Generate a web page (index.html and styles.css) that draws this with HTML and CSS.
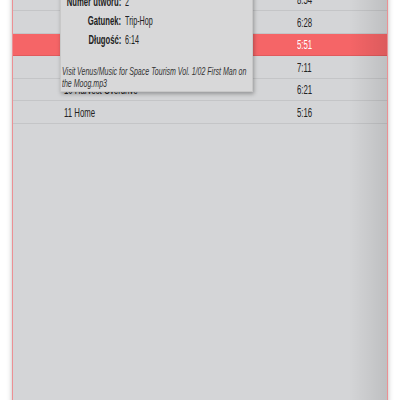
FILE: index.html
```html
<html>

<head>
    <meta charset="UTF-8" />
    <link rel="stylesheet" href="styles.css">
</head>

<body>
    <div id="app">
        <div id="lista">
            <div class="faixa"><span class="nome"><span class="sq">06 Lunar Tides</span></span><span class="tempo"><span class="sq">8:54</span></span></div>
            <div class="faixa"><span class="nome"><span class="sq">07 Orbit Lounge</span></span><span class="tempo"><span class="sq">6:28</span></span></div>
            <div class="faixa ativa"><span class="nome"><span class="sq">08 Zero Gravity</span></span><span class="tempo"><span class="sq">5:51</span></span></div>
            <div class="faixa"><span class="nome"><span class="sq">09 Space Walk</span></span><span class="tempo"><span class="sq">7:11</span></span></div>
            <div class="faixa"><span class="nome"><span class="sq">10 Harvest Overdrive</span></span><span class="tempo"><span class="sq">6:21</span></span></div>
            <div class="faixa"><span class="nome"><span class="sq">11 Home</span></span><span class="tempo"><span class="sq">5:16</span></span></div>
        </div>

        <div id="dica">
            <div class="linha"><span class="rot"><span class="sq">Numer utworu:</span></span><span class="val"><span class="sq">2</span></span></div>
            <div class="linha"><span class="rot"><span class="sq">Gatunek:</span></span><span class="val"><span class="sq">Trip-Hop</span></span></div>
            <div class="linha"><span class="rot"><span class="sq">Długość:</span></span><span class="val"><span class="sq">6:14</span></span></div>
            <div class="arquivo"><span class="sq">Visit Venus/Music for Space Tourism Vol. 1/02 First Man on<br>the Moog.mp3</span></div>
        </div>
    </div>
</body>

</html>
```

FILE: styles.css
```css
body {
    margin: 0;
    background-color: #fff;
    font-family: 'Liberation Sans', Arial, sans-serif;
    overflow: hidden;
}

#app {
    display: flow-root;
    position: relative;
    height: 400px;
}

.sq {
    display: inline-block;
    white-space: nowrap;
    transform: scaleX(0.65);
    transform-origin: 0 50%;
}

#lista {
    position: relative;
    margin: -11.5px 0 0 12px;
    width: 374px;
    height: 430px;
    background-color: #d4d5d7;
    border-left: 1px solid #ec9094;
    border-right: 1px solid #ec9094;
    box-shadow: 0 0 5px rgba(0, 0, 0, 0.28);
}

#lista::after {
    content: "";
    position: absolute;
    top: 0;
    right: 0;
    bottom: 0;
    width: 38px;
    background: linear-gradient(to right, rgba(0, 0, 0, 0), rgba(0, 0, 0, 0.1));
    pointer-events: none;
}

.faixa {
    display: flex;
    align-items: center;
    height: 22.5px;
    box-sizing: border-box;
    border-bottom: 1px solid #c4c5c7;
    padding: 2px 0 0 51px;
    font-size: 12px;
    color: #222;
}

.faixa.ativa {
    background-color: #f56567;
    border-bottom-color: #e15a5c;
    color: #fff;
}

.nome {
    flex: 1;
}

.tempo {
    width: 90px;
}

#dica {
    position: absolute;
    left: 60px;
    top: -8px;
    width: 193px;
    height: 100px;
    box-sizing: border-box;
    background-color: #d8d8d9;
    border: 1px solid #c8c8c8;
    border-top: none;
    box-shadow: 1px 2px 4px rgba(0, 0, 0, 0.3);
    font-size: 12px;
    color: #222;
}

.linha {
    display: flex;
    gap: 4px;
    height: 19px;
    align-items: center;
}

.rot {
    display: flex;
    justify-content: flex-end;
    width: 60px;
    font-weight: bold;
}

.rot .sq {
    flex-shrink: 0;
    transform: scaleX(0.64);
    transform-origin: 100% 50%;
}

.val .sq {
    transform: scaleX(0.6);
}

.arquivo {
    margin-top: 16px;
    padding-left: 1px;
    font-size: 10.5px;
    line-height: 12px;
    font-style: italic;
    color: #333;
}

.arquivo .sq {
    transform: scaleX(0.67);
}
```
